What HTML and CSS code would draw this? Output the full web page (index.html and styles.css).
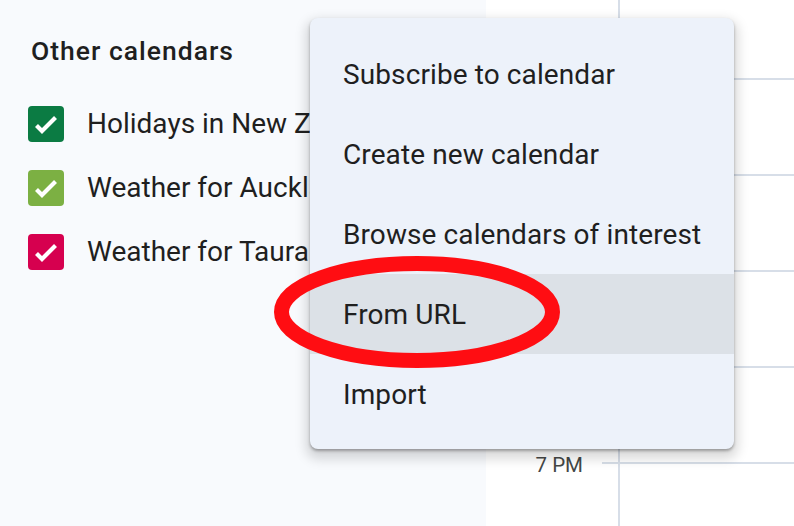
FILE: index.html
```html
<!DOCTYPE html>
<html>
<head>
<meta charset="utf-8">
<link rel="stylesheet" href="styles.css">
</head>
<body>
<div class="app">
  <aside class="sidebar">
    <h2 class="title">Other calendars</h2>
    <ul class="cal-list">
      <li class="cal-item">
        <svg class="cb" viewBox="0 0 36 36"><rect width="36" height="36" rx="4" fill="#0b7b43"/><polyline points="8.5,19.5 14,25 27.5,11.5" fill="none" stroke="#fff" stroke-width="4.2"/></svg>
        <span class="cal-label">Holidays in New Zealand</span>
      </li>
      <li class="cal-item">
        <svg class="cb" viewBox="0 0 36 36"><rect width="36" height="36" rx="4" fill="#7cb043"/><polyline points="8.5,19.5 14,25 27.5,11.5" fill="none" stroke="#fff" stroke-width="4.2"/></svg>
        <span class="cal-label">Weather for Auckland</span>
      </li>
      <li class="cal-item">
        <svg class="cb" viewBox="0 0 36 36"><rect width="36" height="36" rx="4" fill="#d6004f"/><polyline points="8.5,19.5 14,25 27.5,11.5" fill="none" stroke="#fff" stroke-width="4.2"/></svg>
        <span class="cal-label">Weather for Tauranga</span>
      </li>
    </ul>
  </aside>
  <main class="grid">
    <div class="row first">
      <div class="label"></div>
      <div class="gutter"></div>
      <div class="day"></div>
    </div>
    <div class="row">
      <div class="label"></div>
      <div class="gutter"></div>
      <div class="day"></div>
    </div>
    <div class="row">
      <div class="label"></div>
      <div class="gutter"></div>
      <div class="day"></div>
    </div>
    <div class="row">
      <div class="label"></div>
      <div class="gutter"></div>
      <div class="day"></div>
    </div>
    <div class="row">
      <div class="label"></div>
      <div class="gutter"></div>
      <div class="day"></div>
    </div>
    <div class="row last">
      <div class="label"><span>7 PM</span></div>
      <div class="gutter"></div>
      <div class="day"></div>
    </div>
  </main>
</div>

<div class="menu">
  <div class="menu-item">Subscribe to calendar</div>
  <div class="menu-item">Create new calendar</div>
  <div class="menu-item">Browse calendars of interest</div>
  <div class="menu-item active">From URL</div>
  <div class="menu-item">Import</div>
</div>

<svg class="annotation" width="794" height="526" viewBox="0 0 794 526">
  <ellipse cx="417" cy="312" rx="135.5" ry="48.5" fill="none" stroke="#ff0d12" stroke-width="15"/>
</svg>
</body>
</html>
```

FILE: styles.css
```css
* { box-sizing: border-box; }

html, body {
  margin: 0;
  padding: 0;
  width: 794px;
  height: 526px;
  overflow: hidden;
  background: #ffffff;
  font-family: Roboto, "Noto Sans", sans-serif;
  color: #1f1f1f;
}

.app {
  display: flex;
  height: 526px;
  overflow: hidden;
}

.sidebar {
  width: 486px;
  flex: none;
  background: #f8fafd;
  padding-top: 34px;
}

.title {
  margin: 0;
  padding-left: 31px;
  font-size: 26.5px;
  font-weight: 500;
  line-height: 34px;
  color: #1f1f1f;
  letter-spacing: 1px;
}

.cal-list {
  list-style: none;
  margin: 0;
  padding: 24px 0 0 28px;
}

.cal-item {
  height: 64px;
  display: flex;
  align-items: center;
  white-space: nowrap;
}

.cb {
  width: 36px;
  height: 36px;
  flex: none;
  display: block;
}

.cal-label {
  margin-left: 23px;
  font-size: 28px;
  line-height: 36px;
  color: #1f1f1f;
}

.grid {
  flex: 1;
  display: flex;
  flex-direction: column;
  height: 526px;
  overflow: hidden;
}

.row {
  display: flex;
  height: 96px;
  flex: none;
}

.row.first {
  height: 78px;
}

.row.last {
  height: auto;
  flex: 1;
  min-height: 0;
}

.label {
  width: 116px;
  flex: none;
  text-align: right;
  padding-right: 19px;
  font-size: 20.5px;
  line-height: 20px;
  color: #444746;
}

.label span {
  display: block;
  margin-top: -7px;
}

.gutter {
  width: 16px;
  flex: none;
  border-top: 2px solid #d7dee8;
}

.day {
  flex: 1;
  border-top: 2px solid #d7dee8;
  border-left: 2px solid #d7dee8;
}

.row.first .gutter,
.row.first .day {
  border-top: none;
}

.menu {
  position: absolute;
  left: 310px;
  top: 18px;
  width: 424px;
  height: 431px;
  padding: 16px 0 15px;
  background: #edf2fa;
  border-radius: 8px;
  box-shadow: 0 2px 3px rgba(0, 0, 0, 0.3), 0 6px 12px 4px rgba(0, 0, 0, 0.15);
}

.menu-item {
  height: 80px;
  display: flex;
  align-items: center;
  padding-left: 33px;
  font-size: 28px;
  color: #1f1f1f;
  white-space: nowrap;
  letter-spacing: 0.1px;
}

.menu-item.active {
  background: #dce1e7;
}

.annotation {
  position: absolute;
  left: 0;
  top: 0;
  pointer-events: none;
}
```
